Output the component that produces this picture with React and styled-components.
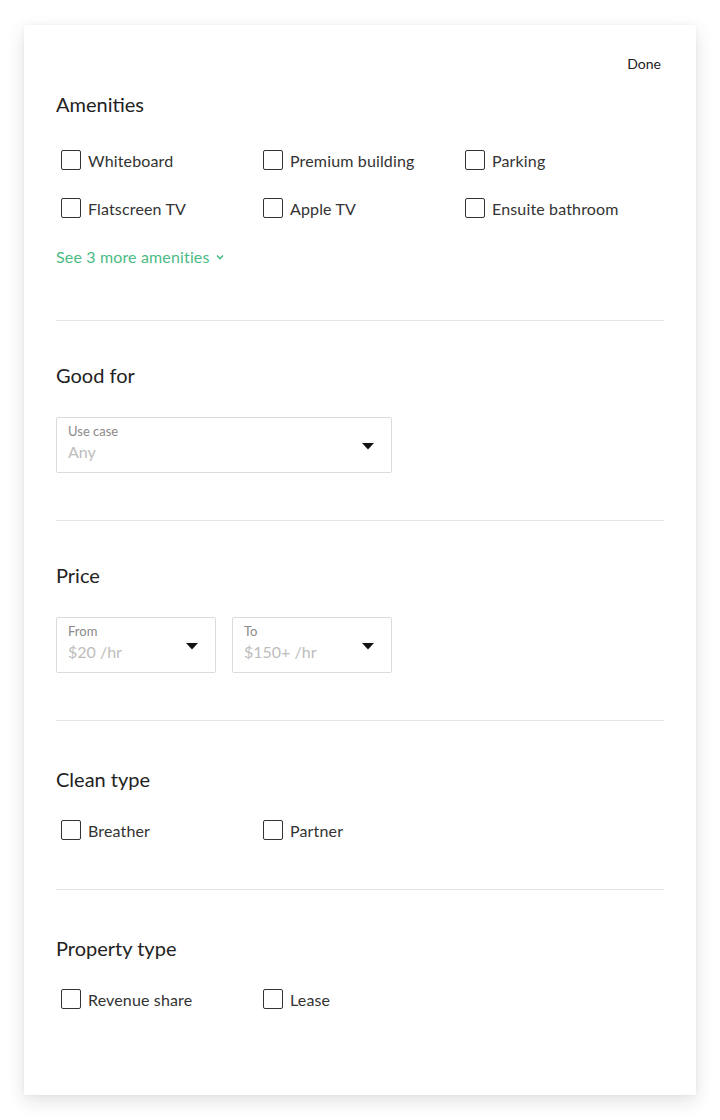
import React from 'react'
import styled, { createGlobalStyle } from 'styled-components'

const GlobalStyle = createGlobalStyle`
    body {
        margin: 0;
        background: #ffffff;
        font-family: Lato, "Noto Sans", sans-serif;
        color: #222222;
    }
`

const Page = styled.div`
    width: 720px;
    height: 1120px;
    padding: 25px 24px 0;
    box-sizing: border-box;
`

const Card = styled.div`
    background: #ffffff;
    box-shadow: 0 6px 18px rgba(0, 0, 0, 0.12), 0 0 4px rgba(0, 0, 0, 0.04);
    padding: 29px 32px 0;
    height: 1070px;
    box-sizing: border-box;
`

const TopBar = styled.div`
    display: flex;
    justify-content: flex-end;
`

const DoneButton = styled.button`
    border: none;
    background: none;
    padding: 0 3px 0 0;
    font-family: inherit;
    font-size: 14px;
    line-height: 20px;
    color: #222222;
    cursor: pointer;
`

const Section = styled.section`
    padding-top: ${({ top }) => top}px;
    padding-bottom: ${({ bottom }) => bottom}px;
    border-bottom: ${({ last }) => last ? 'none' : '1px solid #e4e4e4'};
`

const Heading = styled.h2`
    margin: 0 0 ${({ gap }) => gap}px;
    font-size: 20px;
    line-height: 28px;
    font-weight: 400;
    color: #222222;
`

const CheckGrid = styled.div`
    display: grid;
    grid-template-columns: repeat(3, 202px);
    row-gap: 24px;
`

const CheckItem = styled.label`
    display: flex;
    align-items: center;
    gap: 7px;
    padding-left: 5px;
    height: 24px;
    font-size: 16px;
    letter-spacing: 0.15px;
    color: #333333;
    cursor: pointer;
`

const Box = styled.span`
    width: 18px;
    height: 18px;
    border: 1px solid #333333;
    border-radius: 2px;
    flex-shrink: 0;
`

const MoreLink = styled.a`
    display: inline-flex;
    align-items: center;
    gap: 6px;
    margin-top: 25px;
    font-size: 16px;
    line-height: 24px;
    letter-spacing: 0.15px;
    color: #4cbb84;
    text-decoration: none;
    cursor: pointer;
`

const SelectRow = styled.div`
    display: flex;
    gap: 16px;
`

const SelectBox = styled.div`
    position: relative;
    width: ${({ width }) => width}px;
    height: 56px;
    box-sizing: border-box;
    border: 1px solid #dcdcdc;
    border-radius: 2px;
    padding: 5px 11px 0;
    display: flex;
    flex-direction: column;
`

const SelectLabel = styled.span`
    font-size: 13px;
    line-height: 17px;
    color: #8a8a8a;
`

const SelectValue = styled.span`
    font-size: 16px;
    line-height: 22px;
    margin-top: 1px;
    color: #bdbdbd;
`

const Caret = styled.svg`
    position: absolute;
    right: 17px;
    top: 25px;
`

const Checkbox = ({ label }) => (
    <CheckItem>
        <Box />
        {label}
    </CheckItem>
)

const Select = ({ label, value, width }) => (
    <SelectBox width={width}>
        <SelectLabel>{label}</SelectLabel>
        <SelectValue>{value}</SelectValue>
        <Caret width="12" height="7" viewBox="0 0 12 7">
            <path d="M0 0 L12 0 L6 6.5 Z" fill="#111111" />
        </Caret>
    </SelectBox>
)

const amenities = ['Whiteboard', 'Premium building', 'Parking', 'Flatscreen TV', 'Apple TV', 'Ensuite bathroom']

export default function App() {
    return (
        <Page>
            <GlobalStyle />
            <Card>
                <TopBar>
                    <DoneButton>Done</DoneButton>
                </TopBar>

                <Section top={16} bottom={51}>
                    <Heading gap={30}>Amenities</Heading>
                    <CheckGrid>
                        {amenities.map(a => <Checkbox key={a} label={a} />)}
                    </CheckGrid>
                    <MoreLink>
                        See 3 more amenities
                        <svg width="8" height="6" viewBox="0 0 8 6">
                            <path d="M1 1.5 L4 4.5 L7 1.5" fill="none" stroke="#4cbb84" strokeWidth="1.6" />
                        </svg>
                    </MoreLink>
                </Section>

                <Section top={40} bottom={47}>
                    <Heading gap={28}>Good for</Heading>
                    <Select label="Use case" value="Any" width={336} />
                </Section>

                <Section top={40} bottom={47}>
                    <Heading gap={28}>Price</Heading>
                    <SelectRow>
                        <Select label="From" value="$20 /hr" width={160} />
                        <Select label="To" value="$150+ /hr" width={160} />
                    </SelectRow>
                </Section>

                <Section top={44} bottom={47}>
                    <Heading gap={25}>Clean type</Heading>
                    <CheckGrid>
                        <Checkbox label="Breather" />
                        <Checkbox label="Partner" />
                    </CheckGrid>
                </Section>

                <Section top={44} bottom={0} last>
                    <Heading gap={25}>Property type</Heading>
                    <CheckGrid>
                        <Checkbox label="Revenue share" />
                        <Checkbox label="Lease" />
                    </CheckGrid>
                </Section>
            </Card>
        </Page>
    )
}
